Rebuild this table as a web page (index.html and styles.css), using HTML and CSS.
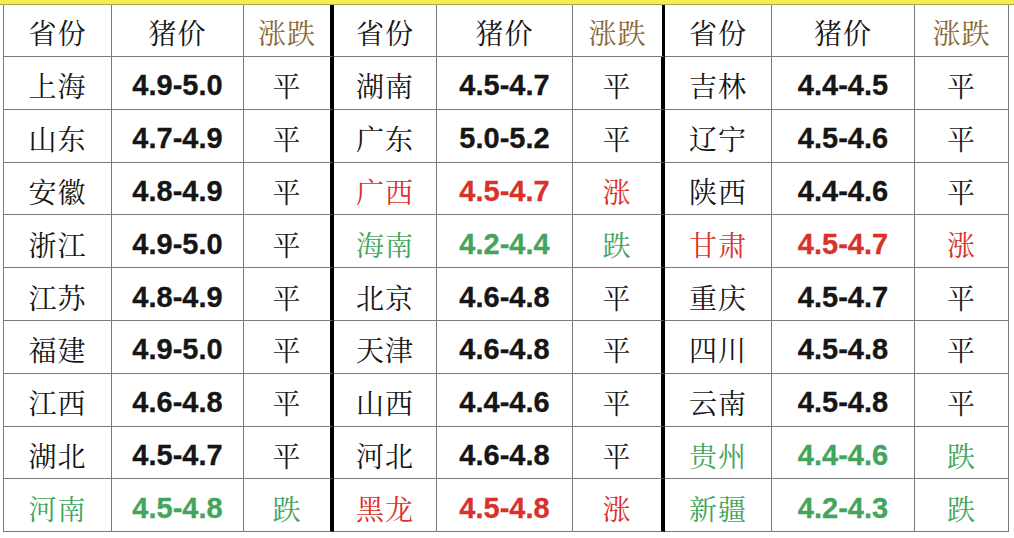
FILE: index.html
```html
<!DOCTYPE html>
<html lang="zh">
<head>
<meta charset="utf-8">
<link rel="stylesheet" href="styles.css">
</head>
<body>
<div class="topbar"></div>
<div class="grid">
  <div class="c hd">省份</div><div class="c hd">猪价</div><div class="c hd trend end">涨跌</div>
  <div class="c hd">省份</div><div class="c hd">猪价</div><div class="c hd trend end">涨跌</div>
  <div class="c hd">省份</div><div class="c hd">猪价</div><div class="c hd trend">涨跌</div>

  <div class="c">上海</div><div class="c num">4.9-5.0</div><div class="c end">平</div>
  <div class="c">湖南</div><div class="c num">4.5-4.7</div><div class="c end">平</div>
  <div class="c">吉林</div><div class="c num">4.4-4.5</div><div class="c">平</div>

  <div class="c">山东</div><div class="c num">4.7-4.9</div><div class="c end">平</div>
  <div class="c">广东</div><div class="c num">5.0-5.2</div><div class="c end">平</div>
  <div class="c">辽宁</div><div class="c num">4.5-4.6</div><div class="c">平</div>

  <div class="c">安徽</div><div class="c num">4.8-4.9</div><div class="c end">平</div>
  <div class="c up">广西</div><div class="c num up">4.5-4.7</div><div class="c end up">涨</div>
  <div class="c">陕西</div><div class="c num">4.4-4.6</div><div class="c">平</div>

  <div class="c">浙江</div><div class="c num">4.9-5.0</div><div class="c end">平</div>
  <div class="c down">海南</div><div class="c num down">4.2-4.4</div><div class="c end down">跌</div>
  <div class="c up">甘肃</div><div class="c num up">4.5-4.7</div><div class="c up">涨</div>

  <div class="c">江苏</div><div class="c num">4.8-4.9</div><div class="c end">平</div>
  <div class="c">北京</div><div class="c num">4.6-4.8</div><div class="c end">平</div>
  <div class="c">重庆</div><div class="c num">4.5-4.7</div><div class="c">平</div>

  <div class="c">福建</div><div class="c num">4.9-5.0</div><div class="c end">平</div>
  <div class="c">天津</div><div class="c num">4.6-4.8</div><div class="c end">平</div>
  <div class="c">四川</div><div class="c num">4.5-4.8</div><div class="c">平</div>

  <div class="c">江西</div><div class="c num">4.6-4.8</div><div class="c end">平</div>
  <div class="c">山西</div><div class="c num">4.4-4.6</div><div class="c end">平</div>
  <div class="c">云南</div><div class="c num">4.5-4.8</div><div class="c">平</div>

  <div class="c">湖北</div><div class="c num">4.5-4.7</div><div class="c end">平</div>
  <div class="c">河北</div><div class="c num">4.6-4.8</div><div class="c end">平</div>
  <div class="c down">贵州</div><div class="c num down">4.4-4.6</div><div class="c down">跌</div>

  <div class="c down">河南</div><div class="c num down">4.5-4.8</div><div class="c end down">跌</div>
  <div class="c up">黑龙</div><div class="c num up">4.5-4.8</div><div class="c end up">涨</div>
  <div class="c down">新疆</div><div class="c num down">4.2-4.3</div><div class="c down">跌</div>
</div>
</body>
</html>
```
FILE: styles.css
```css
html, body {
  margin: 0;
  padding: 0;
  background: #ffffff;
}
body {
  width: 1014px;
  height: 538px;
  overflow: hidden;
}
.topbar {
  height: 4px;
  background: #f4ef4f;
  border-bottom: 1px solid #a9a45a;
}
.grid {
  margin-left: 3px;
  width: 1006px;
  box-sizing: border-box;
  border-left: 1px solid #7a7a7a;
  display: grid;
  grid-template-columns: 108px 132px 90px 103px 136px 92px 107px 143px 94px;
  grid-template-rows: 52px repeat(9, 52.8px);
}
.c {
  box-sizing: border-box;
  border-right: 1px solid #7a7a7a;
  border-bottom: 1px solid #7a7a7a;
  display: flex;
  align-items: center;
  justify-content: center;
  font-family: "Noto Serif CJK SC", "Noto Sans CJK SC", serif;
  font-size: 28px;
  letter-spacing: 1px;
  color: #161616;
  padding-top: 5px;
}
.c.hd {
  padding-top: 3px;
}
.c.end {
  border-right: 4px solid #000000;
}
.grid > .c:nth-child(6) {
  border-right-width: 3px;
}
.num {
  font-family: "Liberation Sans", Arial, sans-serif;
  font-weight: bold;
  font-size: 29px;
  letter-spacing: 0;
  padding-top: 6px;
  -webkit-text-stroke: 0.3px currentColor;
}
.hd.trend {
  color: #8c6a3a;
}
.up {
  color: #d8322b;
}
.down {
  color: #43a55c;
}
```
